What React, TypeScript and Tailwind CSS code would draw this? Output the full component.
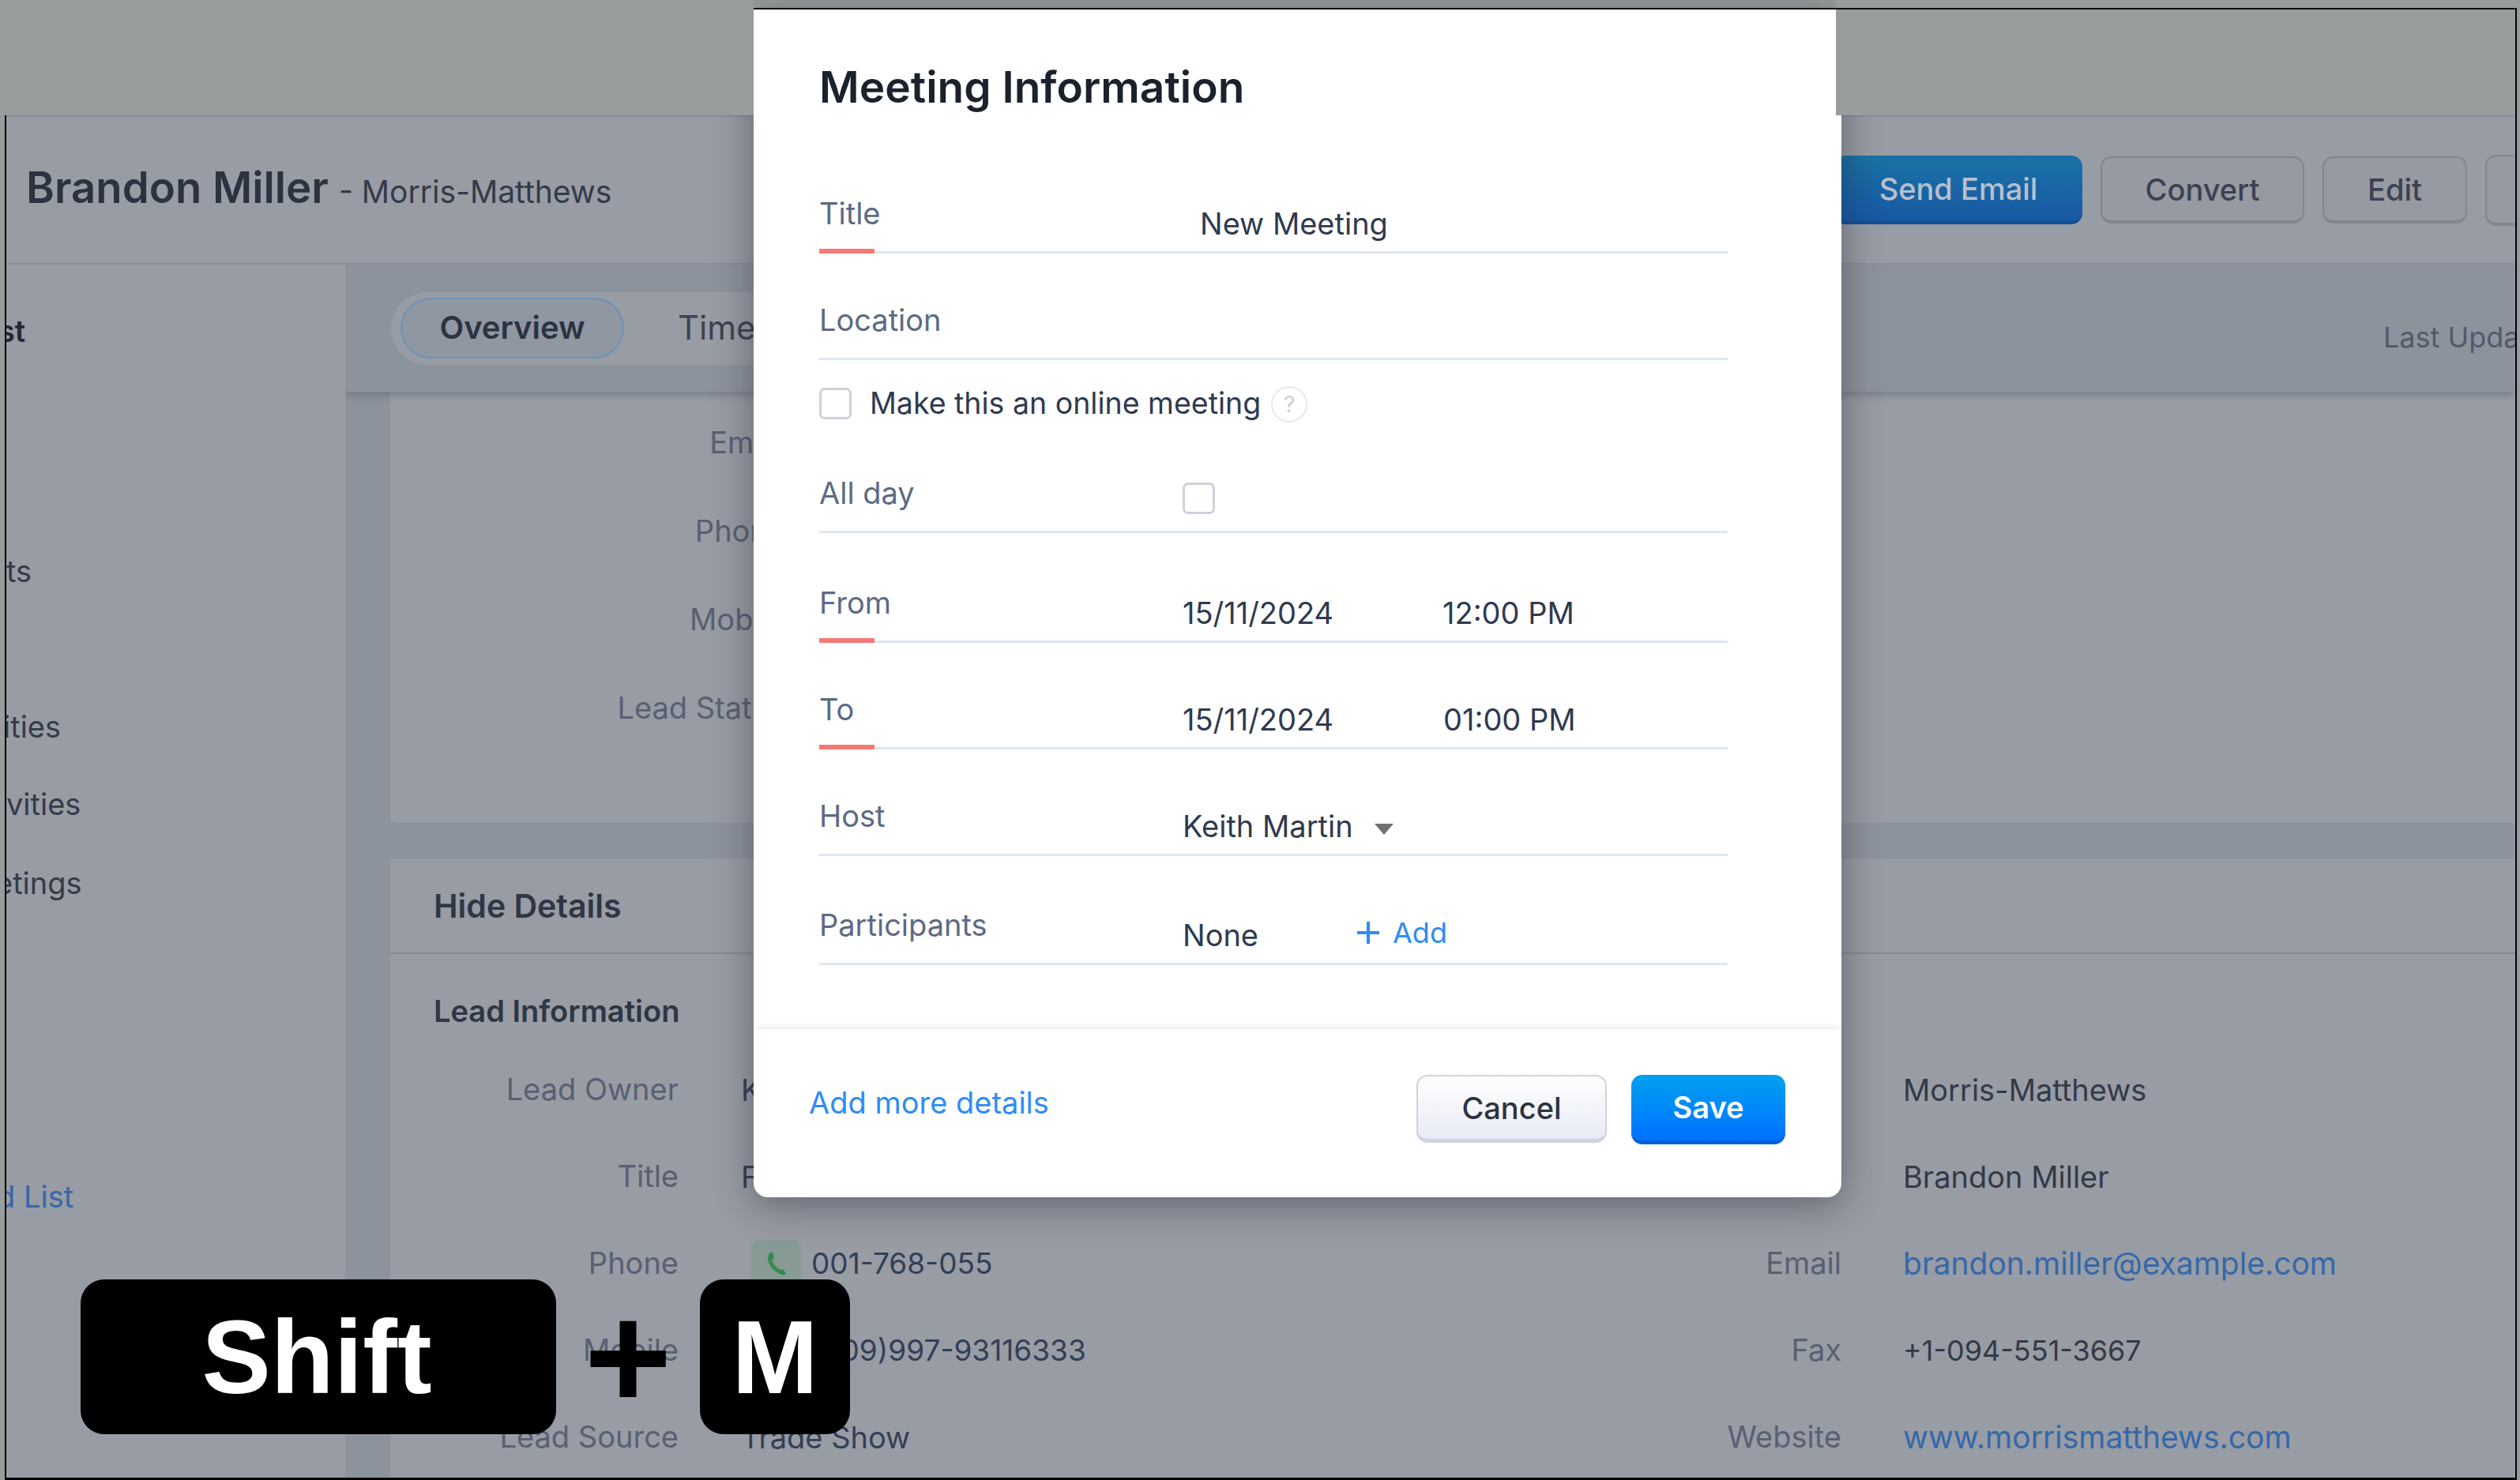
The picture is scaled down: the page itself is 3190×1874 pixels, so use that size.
const sideItems = [
  { text: "st", cls: "-ml-[10px] h-[122px] pt-[60px] font-semibold text-[#232936]" },
  { text: "ts", cls: "h-[316px] pt-[242px] text-[#343b4a]" },
  { text: "ities", cls: "-ml-[4px] h-[197px] pt-[123px] text-[#343b4a]" },
  { text: "vities", cls: "h-[98px] pt-[24px] text-[#343b4a]" },
  { text: "etings", cls: "-ml-[14px] h-[100px] pt-[26px] text-[#343b4a]" },
  { text: "d List", cls: "-ml-[12px] h-[397px] pt-[323px] text-[#3568a8]" },
];

const topRows = ["Email", "Phone", "Mobile", "Lead Status"];

const PhoneBadge = () => (
  <span className="mr-[13px] flex h-[60px] w-[63px] items-center justify-center rounded-[10px] bg-[#879a94]">
    <svg width="28" height="30" viewBox="0 0 28 30" fill="none">
      <path d="M7 3C3 11 9 23 23 27" stroke="#37894f" strokeWidth="5" strokeLinecap="round" />
      <path d="M5 2l5 1 1 6-4 1zM17 22l6 1 2 4-4 2-5-3z" fill="#37894f" />
    </svg>
  </span>
);

const LeftRow = ({ label, value, phone }: { label: string; value: string; phone?: boolean }) => (
  <div className="flex h-[110px] items-center">
    <div className="w-[365px] pb-[2px] text-right text-[#586073]">{label}</div>
    <div className={phone ? "ml-[92px] flex items-center text-[37px] text-[#333f55]" : "ml-[79px] text-[#333f55]"}>
      {phone && <PhoneBadge />}
      {value}
    </div>
  </div>
);

const RightRow = ({ label, value, valueCls }: { label: string; value: string; valueCls: string }) => (
  <div className="flex h-[110px] items-center">
    <div className="w-[737px] pb-[2px] text-right text-[#586073]">{label}</div>
    <div className={`ml-[78px] ${valueCls}`}>{value}</div>
  </div>
);

const PageBehind = () => (
  <div className="flex h-full flex-col overflow-hidden border-x-[2px] border-b-[3px] border-x-black border-b-black bg-[#989ca5] text-[38px] leading-[48px]">
    <div className="flex h-[189px] shrink-0 items-center border-y-[2px] border-y-[#8a8e99]">
      <div className="flex w-[2314px] shrink-0 items-baseline pb-[7px] pl-[25px] text-[#2b3340]">
        <span className="text-[54.5px] font-semibold leading-[64px]">Brandon Miller</span>
        <span className="ml-[13px] text-[39px] text-[#333b4a]">- Morris-Matthews</span>
      </div>
      <div className="flex shrink-0 items-center gap-[23px] text-[38px] font-medium">
        <button className="h-[87px] w-[314px] rounded-[14px] border-b-[4px] border-[#154e93] bg-gradient-to-b from-[#1a72a5] to-[#1858a3] text-[#b9c0cc]">Send Email</button>
        <button className="h-[85px] w-[258px] rounded-[14px] border-[2px] border-b-[4px] border-[#82868f] bg-[#969aa3] text-[#3a4252]">Convert</button>
        <button className="h-[85px] w-[183px] rounded-[14px] border-[2px] border-b-[4px] border-[#82868f] bg-[#969aa3] text-[#3a4252]">Edit</button>
        <button className="h-[90px] w-[120px] shrink-0 rounded-[14px] border-[2px] border-b-[4px] border-[#82868f] bg-[#969aa3]" />
      </div>
    </div>

    <div className="flex min-h-0 flex-1">
      <aside className="w-[429px] shrink-0 overflow-hidden whitespace-nowrap">
        {sideItems.map((item) => (
          <div key={item.text} className={item.cls}>{item.text}</div>
        ))}
      </aside>

      <main className="min-w-0 flex-1 overflow-hidden bg-[#8d939d]">
        <div className="relative z-10 flex h-[161px] items-center whitespace-nowrap bg-[#8d939d] pl-[58px] [box-shadow:0_6px_8px_rgba(60,64,80,0.25)]">
          <div className="flex h-[92px] w-[1400px] shrink-0 items-center rounded-l-full bg-[#989ca5] pl-[12px]">
            <div className="flex h-[77px] w-[283px] items-center justify-center rounded-full border-[2px] border-[#6c93b5] bg-[#8f97a3] pb-[2px] text-[40px] font-semibold text-[#2c3340]">Overview</div>
            <div className="ml-[68px] pb-[2px] text-[42px] text-[#3c4454]">Timeline</div>
          </div>
          <div className="ml-[1122px] mt-[22px] shrink-0 text-[36px] text-[#525a6b]">Last Updated</div>
        </div>

        <div className="pl-[57px]">
          <div className="h-[546px] rounded-bl-[8px] bg-[#989ca5] pt-[8px]">
            {topRows.map((r) => (
              <div key={r} className="flex h-[112px] items-center">
                <div className="w-[500px] text-right text-[#586073]">{r}</div>
              </div>
            ))}
          </div>

          <div className="mt-[45px] bg-[#989ca5]">
            <div className="flex h-[121px] items-center border-b-[2px] border-[#858a96] pl-[55px] text-[41px] font-semibold text-[#2f3644]">Hide Details</div>
            <div className="flex h-[117px] items-center pl-[55px] pt-[26px] font-semibold text-[#2f3644]">Lead Information</div>
            <div className="flex">
              <div className="w-[1100px] shrink-0">
                <LeftRow label="Lead Owner" value="K" />
                <LeftRow label="Title" value="F" />
                <LeftRow label="Phone" value="001-768-055" phone />
                <div className="flex h-[110px] items-center">
                  <div className="w-[365px] pb-[2px] text-right text-[#586073]">Mobile</div>
                  <div className="ml-[192px] text-[37px] text-[#333f55]">(09)997-93116333</div>
                </div>
                <LeftRow label="Lead Source" value="Trade Show" />
              </div>
              <div>
                <RightRow label="Company" value="Morris-Matthews" valueCls="text-[#333a48]" />
                <RightRow label="Lead Name" value="Brandon Miller" valueCls="text-[#333a48]" />
                <RightRow label="Email" value="brandon.miller@example.com" valueCls="text-[39px] text-[#3568a8]" />
                <RightRow label="Fax" value="+1-094-551-3667" valueCls="text-[36px] text-[#333a48]" />
                <RightRow label="Website" value="www.morrismatthews.com" valueCls="text-[39px] text-[#3568a8]" />
              </div>
            </div>
          </div>
        </div>
      </main>
    </div>
  </div>
);

const FormRow = ({ label, h, accent, children }: { label: string; h: string; accent?: boolean; children?: React.ReactNode }) => (
  <div className={`relative flex items-end border-b-[3px] border-[#dfe6f2] ${h}`}>
    <div className="w-[460px] shrink-0 pb-[24px] text-[#5c6a85]">{label}</div>
    <div className="flex flex-1 items-center pb-[11px] text-[#2f3a4f]">{children}</div>
    {accent && <div className="absolute -bottom-[3px] left-0 h-[6px] w-[70px] bg-[#f47a78]" />}
  </div>
);

const Check = () => <span className="block h-[40px] w-[41px] rounded-[7px] border-[3px] border-[#cdd2da] bg-white" />;

const MeetingDialog = () => (
  <div className="absolute left-[954px] top-[12px] z-10 flex h-[1504px] w-[1377px] flex-col rounded-b-[18px] bg-white text-[38px] leading-[48px] [box-shadow:0_10px_50px_rgba(30,34,45,0.45)]">
    <h1 className="flex h-[172px] shrink-0 items-center pl-[83px] pt-[24px] text-[55px] font-semibold text-[#1c222c]">Meeting Information</h1>
    <div className="w-[1233px] shrink-0 pl-[83px]">
      <FormRow label="Title" h="h-[137px]" accent>
        <span className="ml-[22px]">New Meeting</span>
      </FormRow>
      <FormRow label="Location" h="h-[135px]" />
      <div className="flex h-[114px] items-center pb-[4px]">
        <Check />
        <span className="ml-[23px] text-[37.5px] text-[#2f3a4f]">Make this an online meeting</span>
        <span className="ml-[13px] mt-[2px] flex h-[46px] w-[46px] items-center justify-center rounded-full border-[2px] border-[#e8e8e8] text-[28px] text-[#cfcfcf]">?</span>
      </div>
      <FormRow label="All day" h="h-[105px]">
        <span className="mb-[10px]"><Check /></span>
      </FormRow>
      <FormRow label="From" h="h-[139px]" accent>
        <span className="w-[329px]">15/11/2024</span>
        <span>12:00 PM</span>
      </FormRow>
      <FormRow label="To" h="h-[135px]" accent>
        <span className="w-[330px]">15/11/2024</span>
        <span>01:00 PM</span>
      </FormRow>
      <FormRow label="Host" h="h-[135px]">
        <span>Keith Martin</span>
        <svg className="ml-[27px] mt-[8px]" width="24" height="14" viewBox="0 0 24 14">
          <polygon points="0,0 24,0 12,14" fill="#707070" />
        </svg>
      </FormRow>
      <FormRow label="Participants" h="h-[138px]">
        <span className="w-[220px]">None</span>
        <span className="-mt-[6px] flex items-center text-[36px] text-[#2e8cf5]">
          <svg className="mr-[16px]" width="30" height="30" viewBox="0 0 30 30">
            <path d="M15 1v28M1 15h28" stroke="#2e8cf5" strokeWidth="4" />
          </svg>
          Add
        </span>
      </FormRow>
    </div>

    <div className="mt-auto flex h-[213px] shrink-0 items-center justify-between pb-[10px] pl-[70px] pr-[71px] [box-shadow:0_-6px_8px_-4px_rgba(0,0,0,0.1)]">
      <a className="-mt-[18px] text-[#2e8cf5]">Add more details</a>
      <div className="flex gap-[31px] text-[38px] font-medium">
        <button className="h-[86px] w-[241px] rounded-[14px] border-[2px] border-b-[5px] border-[#cfd3de] bg-gradient-to-b from-white to-[#e8ebf5] pt-[2px] text-[#2c3340]">Cancel</button>
        <button className="h-[88px] w-[195px] rounded-[14px] border-b-[5px] border-[#0060d8] bg-gradient-to-b from-[#00a0f0] to-[#0070ff] font-semibold text-white">Save</button>
      </div>
    </div>
  </div>
);

export default function App() {
  return (
    <div className="relative h-[1874px] w-[3190px] overflow-hidden bg-[#999c9c] pl-[6px] pr-[4px] pt-[146px] [font-family:Inter,'Noto_Sans',sans-serif]">
      <PageBehind />
      <MeetingDialog />

      {/* the band above the page was spliced in over the dialog shadow */}
      <div className="absolute left-0 top-0 z-20 h-[146px] w-[954px] bg-[#999c9c]" />
      <div className="absolute left-[2324px] top-0 z-20 h-[146px] w-[866px] bg-[#999c9c]" />
      <div className="absolute left-[954px] top-[10px] z-30 h-[2px] w-[2232px] bg-black" />
      <div className="absolute left-[3184px] top-[10px] z-30 h-[140px] w-[2px] bg-black" />

      <div className="absolute left-[102px] top-[1620px] z-40 flex items-center text-white [font-family:'Liberation_Sans',Arial,sans-serif]">
        <div className="flex h-[196px] w-[602px] items-center justify-center rounded-[30px] bg-black pr-[4px] text-[131px] font-bold leading-none">Shift</div>
        <div className="flex w-[182px] items-center justify-center text-[190px] font-bold leading-none text-black">+</div>
        <div className="flex h-[196px] w-[190px] items-center justify-center rounded-[30px] bg-black text-[131px] font-bold leading-none">M</div>
      </div>
    </div>
  );
}
